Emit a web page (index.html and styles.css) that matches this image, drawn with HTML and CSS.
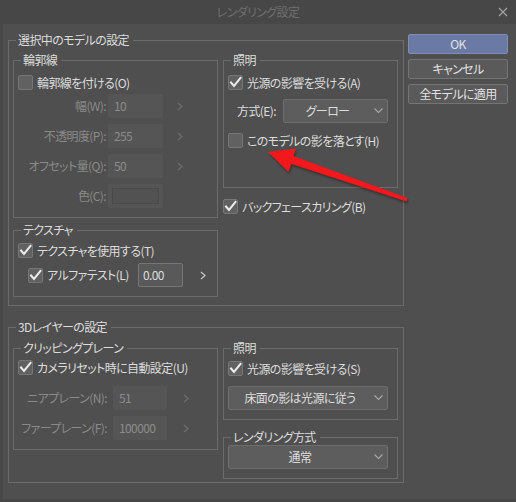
FILE: index.html
```html
<!DOCTYPE html>
<html lang="ja">
<head>
<meta charset="utf-8">
<title>レンダリング設定</title>
<link rel="stylesheet" href="styles.css">
</head>
<body>
<div class="window">
  <div class="titlebar">
    <span></span>
    <span class="title">レンダリング設定</span>
    <svg class="close" width="10" height="10" viewBox="0 0 10 10"><path d="M1 1L9 9M9 1L1 9" stroke="#a4a4a4" stroke-width="1.1" fill="none"/></svg>
  </div>
  <div class="client">
    <div class="main">
      <fieldset class="group g1">
        <legend>選択中のモデルの設定</legend>
        <div class="cols">
          <div class="col">
            <fieldset class="sub outline">
              <legend>輪郭線</legend>
              <div class="check"><span class="box"></span><span>輪郭線を付ける(O)</span></div>
              <div class="fields f1">
                <div class="field"><span class="flabel">幅(W):</span><span class="input dis">10</span><svg class="chev" width="6" height="9" viewBox="0 0 6 9"><path d="M1 1L5 4.5L1 8" class="dim"/></svg></div>
                <div class="field"><span class="flabel">不透明度(P):</span><span class="input dis">255</span><svg class="chev" width="6" height="9" viewBox="0 0 6 9"><path d="M1 1L5 4.5L1 8" class="dim"/></svg></div>
                <div class="field"><span class="flabel">オフセット量(Q):</span><span class="input dis">50</span><svg class="chev" width="6" height="9" viewBox="0 0 6 9"><path d="M1 1L5 4.5L1 8" class="dim"/></svg></div>
                <div class="field"><span class="flabel">色(C):</span><span class="input dis color"><span class="swatch"></span></span></div>
              </div>
            </fieldset>
            <fieldset class="sub texture">
              <legend>テクスチャ</legend>
              <div class="check"><span class="box on"><svg width="15" height="15" viewBox="0 0 15 15"><path d="M3 7.5L6 11L12.5 3" class="tick"/></svg></span><span>テクスチャを使用する(T)</span></div>
              <div class="alpha">
                <div class="check"><span class="box on"><svg width="15" height="15" viewBox="0 0 15 15"><path d="M3 7.5L6 11L12.5 3" class="tick"/></svg></span><span>アルファテスト(L)</span></div>
                <span class="input en">0.00</span>
                <svg class="chev" width="6" height="9" viewBox="0 0 6 9"><path d="M1 1L5 4.5L1 8" class="lit"/></svg>
              </div>
            </fieldset>
          </div>
          <div class="col">
            <fieldset class="sub light1">
              <legend>照明</legend>
              <div class="check"><span class="box on"><svg width="15" height="15" viewBox="0 0 15 15"><path d="M3 7.5L6 11L12.5 3" class="tick"/></svg></span><span>光源の影響を受ける(A)</span></div>
              <div class="mode">
                <span class="mlabel">方式(E):</span>
                <div class="select s-mode"><span class="sel-text">グーロー</span><svg width="9" height="6" viewBox="0 0 9 6"><path d="M0.5 0.5L4.5 4.5L8.5 0.5" class="down"/></svg></div>
              </div>
              <div class="check shadow"><span class="box"></span><span>このモデルの影を落とす(H)</span></div>
            </fieldset>
            <div class="check backface"><span class="box on"><svg width="15" height="15" viewBox="0 0 15 15"><path d="M3 7.5L6 11L12.5 3" class="tick"/></svg></span><span>バックフェースカリング(B)</span></div>
          </div>
        </div>
      </fieldset>

      <fieldset class="group g2">
        <legend>3Dレイヤーの設定</legend>
        <div class="cols">
          <div class="col">
            <fieldset class="sub clip">
              <legend>クリッピングプレーン</legend>
              <div class="check"><span class="box on"><svg width="15" height="15" viewBox="0 0 15 15"><path d="M3 7.5L6 11L12.5 3" class="tick"/></svg></span><span>カメラリセット時に自動設定(U)</span></div>
              <div class="fields f2">
                <div class="field"><span class="flabel">ニアプレーン(N):</span><span class="input dis">51</span><svg class="chev" width="6" height="9" viewBox="0 0 6 9"><path d="M1 1L5 4.5L1 8" class="dim"/></svg></div>
                <div class="field"><span class="flabel">ファープレーン(F):</span><span class="input dis">100000</span><svg class="chev" width="6" height="9" viewBox="0 0 6 9"><path d="M1 1L5 4.5L1 8" class="dim"/></svg></div>
              </div>
            </fieldset>
          </div>
          <div class="col">
            <fieldset class="sub light2">
              <legend>照明</legend>
              <div class="check"><span class="box on"><svg width="15" height="15" viewBox="0 0 15 15"><path d="M3 7.5L6 11L12.5 3" class="tick"/></svg></span><span>光源の影響を受ける(S)</span></div>
              <div class="select s-wide"><span class="sel-text">床面の影は光源に従う</span><svg width="9" height="6" viewBox="0 0 9 6"><path d="M0.5 0.5L4.5 4.5L8.5 0.5" class="down"/></svg></div>
            </fieldset>
            <fieldset class="sub render">
              <legend>レンダリング方式</legend>
              <div class="select s-wide"><span class="sel-text">通常</span><svg width="9" height="6" viewBox="0 0 9 6"><path d="M0.5 0.5L4.5 4.5L8.5 0.5" class="down"/></svg></div>
            </fieldset>
          </div>
        </div>
      </fieldset>
    </div>
    <div class="buttons">
      <div class="btn ok">OK</div>
      <div class="btn">キャンセル</div>
      <div class="btn">全モデルに適用</div>
    </div>
  </div>
  <svg class="arrow" width="516" height="502" viewBox="0 0 516 502">
    <polygon points="268,152 296,148.5 293.5,156 407.5,198 406.5,201.5 291.5,164 288.5,172" fill="#f3181c"/>
  </svg>
</div>
</body>
</html>
```

FILE: styles.css
```css
* { box-sizing: border-box; }

body {
  margin: 0;
  background: #474747;
  font-family: "Noto Sans CJK JP", "Noto Sans", sans-serif;
  font-size: 12px;
  line-height: 14px;
  letter-spacing: -0.6px;
  color: #dddddd;
  font-feature-settings: "palt";
}

.window {
  position: relative;
  width: 516px;
  height: 502px;
  overflow: hidden;
  background: #474747;
}

.titlebar {
  height: 24px;
  display: grid;
  grid-template-columns: 1fr auto 1fr;
  align-items: center;
}
.title {
  color: #6e6e6e;
  font-size: 12px;
}
.close {
  justify-self: end;
  margin-right: 8px;
}

.client {
  margin-left: 3px;
  height: 475px;
  background: #4f4f4f;
  display: flex;
  gap: 4px;
  padding: 9px 0 0 5px;
}

.main { width: 396px; }

fieldset {
  margin: 0;
  border: 1px solid #6b6b6b;
  min-width: 0;
}
legend {
  padding: 0 4px 0 2px;
  margin-left: 3px;
  height: 14px;
  line-height: 14px;
}

.group { padding: 6px 5px 8px 4px; width: 396px; }
.g2 { margin-top: 14px; padding: 7px 5px 3px 4px; }

.cols {
  display: grid;
  grid-template-columns: 205px 175px;
  column-gap: 5px;
  align-items: start;
}

.sub { padding: 7px 0 9px 4px; }

.check {
  display: flex;
  align-items: center;
  height: 17px;
  gap: 4px;
  white-space: nowrap;
}
.box {
  width: 15px;
  height: 15px;
  flex: none;
  border: 1px solid #767676;
  border-radius: 2px;
  background: #616161;
  position: relative;
}
.box svg {
  position: absolute;
  left: -1px;
  top: -1px;
}
.tick {
  fill: none;
  stroke: #ececec;
  stroke-width: 2;
  stroke-linecap: square;
}

.fields { display: flex; flex-direction: column; gap: 6px; margin-top: 3px; }
.field {
  display: flex;
  align-items: center;
  height: 24px;
  color: #8a8a8a;
}
.flabel {
  width: 88px;
  text-align: right;
  margin-right: 2px;
  white-space: nowrap;
}
.input {
  height: 24px;
  width: 55px;
  display: flex;
  align-items: center;
  padding-left: 6px;
  border-radius: 2px;
}
.input.dis { background: #555555; color: #8c8c8c; }
.input.color { padding: 0 4px; }
.swatch {
  width: 47px;
  height: 16px;
  border: 1px solid #4a4a4a;
  background: #525252;
}
.chev { margin-left: 14px; flex: none; }
.chev path { fill: none; stroke-width: 1.2; }
.chev .dim { stroke: #6e6e6e; }
.chev .lit { stroke: #c8c8c8; }

.f2 { margin-top: 10px; }
.f2 .flabel { width: 89px; margin-right: 6px; }
.f2 .input { width: 54px; }
.f2 .chev { margin-left: 16px; }

.outline { padding-top: 7px; }
.texture { margin-top: 5px; padding-top: 5px; }
.alpha {
  display: flex;
  align-items: center;
  height: 24px;
  margin-top: 4px;
  padding-left: 10px;
}
.alpha .check { width: 110px; }
.input.en {
  width: 45px;
  background: #595959;
  border: 1px solid #767676;
  color: #dddddd;
  padding-left: 4px;
}
.alpha .chev { margin-left: 17px; }

.light1 { padding: 7px 9px 38px 4px; }
.mode {
  display: flex;
  align-items: center;
  margin-top: 8px;
  padding-left: 9px;
}
.mlabel { width: 46px; white-space: nowrap; }
.shadow { margin-top: 9px; }
.backface { margin-top: 10px; }

.select {
  height: 24px;
  display: flex;
  align-items: center;
  background: #5d5d5d;
  border: 1px solid #6d6d6d;
  border-radius: 2px;
}
.s-mode { width: 105px; }
.s-wide { width: 160px; }
.sel-text { flex: 1; text-align: center; white-space: nowrap; }
.select svg { margin: 0 4px 0 3px; flex: none; }
.down { fill: none; stroke: #a8a8a8; stroke-width: 1.1; }

.clip { padding-top: 4px; }
.light2 { padding: 5px 9px 9px 4px; }
.light2 .select { margin-top: 9px; }
.render { margin-top: 10px; padding: 1px 9px 9px 4px; }

.buttons {
  display: flex;
  flex-direction: column;
  gap: 5px;
  width: 100px;
  margin-top: 1px;
}
.btn {
  height: 20px;
  display: flex;
  align-items: center;
  justify-content: center;
  background: #5a5a5a;
  border: 1px solid #747474;
  border-radius: 2px;
  color: #e2e2e2;
  white-space: nowrap;
}
.btn.ok {
  background: #6a7aa4;
  border-color: #7f8db3;
}

.arrow {
  position: absolute;
  left: 0;
  top: 0;
  pointer-events: none;
  filter: drop-shadow(1px 2px 1px rgba(0,0,0,0.35));
}
```
